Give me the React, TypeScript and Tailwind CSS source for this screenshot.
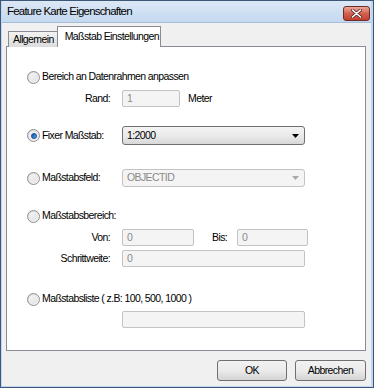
import React from 'react';

const font = { fontFamily: '"Liberation Sans", Arial, sans-serif' };

function Radio({ checked = false }: { checked?: boolean }) {
  return (
    <div className="w-[13px] h-[13px] rounded-full border border-[#8f8f8f] bg-gradient-to-br from-[#d6d6d6] to-[#fbfbfb] flex items-center justify-center shrink-0">
      <div className="w-[9px] h-[9px] rounded-full bg-gradient-to-br from-[#f4f4f4] to-[#e2e2e2] flex items-center justify-center">
        {checked && (
          <div className="w-[6px] h-[6px] rounded-full bg-gradient-to-br from-[#0d4fb5] to-[#56a7ee] border border-[#1e4d93]" />
        )}
      </div>
    </div>
  );
}

function DisabledInput({ value, className }: { value: string; className: string }) {
  return (
    <div className={`h-[17px] border border-[#c3c3c3] bg-[#f4f4f4] rounded-[2px] pl-[4px] leading-[15px] text-[#8a8a8a] ${className}`}>
      {value}
    </div>
  );
}

function Arrow({ color }: { color: string }) {
  return (
    <svg width="7" height="4" viewBox="0 0 7 4">
      <path d="M0 0H7L3.5 4Z" fill={color} />
    </svg>
  );
}

export default function App() {
  return (
    <div className="w-[374px] h-[388px] bg-[#3d5778] p-[1px] text-[10.5px] tracking-[-0.6px]" style={font}>
      <div className="w-full h-full bg-[#c2d6ee] flex flex-col pl-[1px] pr-[2px] pb-[1px]">
        {/* title bar */}
        <div className="h-[21px] flex items-center justify-between bg-gradient-to-b from-[#dce8f6] to-[#c4d8ef] shrink-0">
          <span className="pl-[5px] text-[11.5px] tracking-[-0.8px] text-black">
            Feature Karte Eigenschaften
          </span>
          <div className="mr-[1px] mt-[3px] w-[27px] h-[15px] rounded-[3px] border border-[#6d2b24] bg-gradient-to-b from-[#e8a89c] via-[#d4604f] to-[#c2402f] flex items-center justify-center">
            <svg width="11" height="9" viewBox="0 0 11 9">
              <path d="M1.5 1L9.5 8M9.5 1L1.5 8" stroke="#5a2a25" strokeWidth="3" strokeLinecap="round" />
              <path d="M1.5 1L9.5 8M9.5 1L1.5 8" stroke="#ffffff" strokeWidth="1.6" strokeLinecap="round" />
            </svg>
          </div>
        </div>

        {/* body */}
        <div className="flex-1 bg-[#f0f0f0] border-t border-[#a7bcd6] flex flex-col pl-[4px] pr-[5px]">
          {/* tabs */}
          <div className="flex items-end h-[21px] mt-[2px] pl-[2px] relative z-10">
            <div className="h-[16px] pl-[4px] pr-[3px] border border-[#898c95] border-b-0 border-r-0 bg-gradient-to-b from-[#f2f2f2] to-[#dcdcdc] leading-[15px] mb-[-1px] pb-[1px]">
              Allgemein
            </div>
            <div className="w-[104px] h-[21px] pl-[7px] border border-[#898c95] border-b-0 bg-white leading-[18px] mb-[-1px] whitespace-nowrap">
              Maßstab Einstellungen
            </div>
          </div>

          {/* panel */}
          <div className="h-[305px] border border-[#898c95] bg-white flex flex-col pl-[20px] text-black">
            <div className="mt-[22px] h-[16px] flex items-center">
              <Radio />
              <span className="ml-[2px]">Bereich an Datenrahmen anpassen</span>
            </div>
            <div className="mt-[5px] h-[17px] flex items-center">
              <span className="w-[83px] text-right">Rand:</span>
              <DisabledInput value="1" className="ml-[12px] w-[58px]" />
              <span className="ml-[8px]">Meter</span>
            </div>

            <div className="mt-[19px] h-[19px] flex items-center">
              <div className="w-[95px] flex items-center">
                <Radio checked />
                <span className="ml-[2px]">Fixer Maßstab:</span>
              </div>
              <div className="w-[183px] h-[19px] rounded-[3px] border border-[#707070] bg-gradient-to-b from-[#f3f3f3] via-[#ebebeb] to-[#d8d8d8] flex items-center justify-between pl-[4px] pr-[5px]">
                <span>1:2000</span>
                <Arrow color="#000000" />
              </div>
            </div>

            <div className="mt-[24px] h-[18px] flex items-center">
              <div className="w-[95px] flex items-center">
                <Radio />
                <span className="ml-[2px]">Maßstabsfeld:</span>
              </div>
              <div className="w-[183px] h-[18px] rounded-[3px] border border-[#c3c3c3] bg-[#f4f4f4] flex items-center justify-between pl-[4px] pr-[5px] text-[#8a8a8a]">
                <span>OBJECTID</span>
                <Arrow color="#a9a9a9" />
              </div>
            </div>

            <div className="mt-[21px] h-[16px] flex items-center">
              <Radio />
              <span className="ml-[2px]">Maßstabsbereich:</span>
            </div>
            <div className="mt-[5px] h-[17px] flex items-center">
              <span className="w-[83px] text-right">Von:</span>
              <DisabledInput value="0" className="ml-[12px] w-[72px]" />
              <span className="ml-[18px]">Bis:</span>
              <DisabledInput value="0" className="ml-[10px] w-[71px]" />
            </div>
            <div className="mt-[4px] h-[17px] flex items-center">
              <span className="w-[83px] text-right">Schrittweite:</span>
              <DisabledInput value="0" className="ml-[12px] w-[183px]" />
            </div>

            <div className="mt-[24px] h-[16px] flex items-center">
              <Radio />
              <span className="ml-[2px]">Maßstabsliste ( z.B: 100, 500, 1000 )</span>
            </div>
            <div className="mt-[4px] h-[17px] flex items-center">
              <DisabledInput value="" className="ml-[95px] w-[183px]" />
            </div>
          </div>

          {/* buttons */}
          <div className="flex justify-end gap-[8px] mt-[9px]">
            <button className="w-[70px] h-[21px] rounded-[3px] border border-[#707070] bg-gradient-to-b from-[#f2f2f2] via-[#ebebeb] to-[#d4d4d4] text-black">
              OK
            </button>
            <button className="w-[71px] h-[21px] rounded-[3px] border border-[#707070] bg-gradient-to-b from-[#f2f2f2] via-[#ebebeb] to-[#d4d4d4] text-black">
              Abbrechen
            </button>
          </div>
        </div>
      </div>
    </div>
  );
}
